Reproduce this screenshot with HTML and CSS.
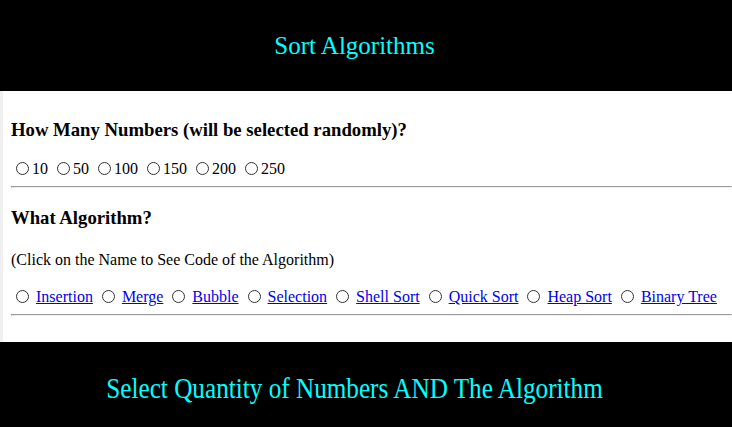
FILE: index.html
```html
<!DOCTYPE html>
<html>
<head>
<meta charset="utf-8">
<title>Sort Algorithms</title>
<link rel="stylesheet" href="styles.css">
</head>
<body>
<header class="top-bar">
  <h1 class="top-title">Sort Algorithms</h1>
</header>
<main class="content">
  <h3 class="question">How Many Numbers (will be selected randomly)?</h3>
  <div class="radio-row">
    <input type="radio" name="qty">10
    <input type="radio" name="qty">50
    <input type="radio" name="qty">100
    <input type="radio" name="qty">150
    <input type="radio" name="qty">200
    <input type="radio" name="qty">250
  </div>
  <hr class="divider">
  <h3 class="question">What Algorithm?</h3>
  <p class="hint">(Click on the Name to See Code of the Algorithm)</p>
  <div class="radio-row">
    <input type="radio" name="alg"> <a href="#">Insertion</a>
    <input type="radio" name="alg"> <a href="#">Merge</a>
    <input type="radio" name="alg"> <a href="#">Bubble</a>
    <input type="radio" name="alg"> <a href="#">Selection</a>
    <input type="radio" name="alg"> <a href="#">Shell Sort</a>
    <input type="radio" name="alg"> <a href="#">Quick Sort</a>
    <input type="radio" name="alg"> <a href="#">Heap Sort</a>
    <input type="radio" name="alg"> <a href="#">Binary Tree</a>
  </div>
  <hr class="divider">
</main>
<footer class="bottom-bar">
  <h2 class="bottom-title">Select Quantity of Numbers AND The Algorithm</h2>
</footer>
</body>
</html>
```
FILE: styles.css
```css
html, body {
  margin: 0;
  padding: 0;
}
body {
  background: #f0f0f0;
  font-family: "Liberation Serif", "Times New Roman", serif;
  font-size: 16px;
  color: #000;
  overflow: hidden;
}
.top-bar {
  background: #000;
  height: 91px;
  padding-right: 23px;
  display: flex;
  align-items: center;
  justify-content: center;
}
.top-title {
  margin: 0;
  color: #00ffff;
  font-family: "Liberation Serif", "Times New Roman", serif;
  font-weight: normal;
  font-size: 25px;
}
.content {
  margin-left: 3px;
  background: #fff;
  padding: 9px 0 18px 8px;
  overflow: hidden;
}
.question {
  font-size: 18.72px;
  margin: 18.72px 0;
}
.radio-row {
  white-space: nowrap;
}
.radio-row input {
  -webkit-appearance: none;
  appearance: none;
  box-sizing: border-box;
  width: 13px;
  height: 13px;
  border: 1px solid #333;
  border-radius: 50%;
  background: #fff;
  margin: 3px 3px 0 5px;
  padding: 0;
  vertical-align: -1px;
}
.hint {
  margin: 22px 0 18px;
}
.divider {
  margin: 8px 0;
}
a {
  color: #0000ee;
}
.bottom-bar {
  background: #000;
  height: 85px;
  padding: 6px 23px 0 0;
  box-sizing: border-box;
  display: flex;
  align-items: center;
  justify-content: center;
}
.bottom-title {
  margin: 0;
  color: #00ffff;
  font-family: "Liberation Serif", "Times New Roman", serif;
  font-weight: normal;
  font-size: 30px;
  white-space: nowrap;
  transform: scaleX(0.84);
}
```
